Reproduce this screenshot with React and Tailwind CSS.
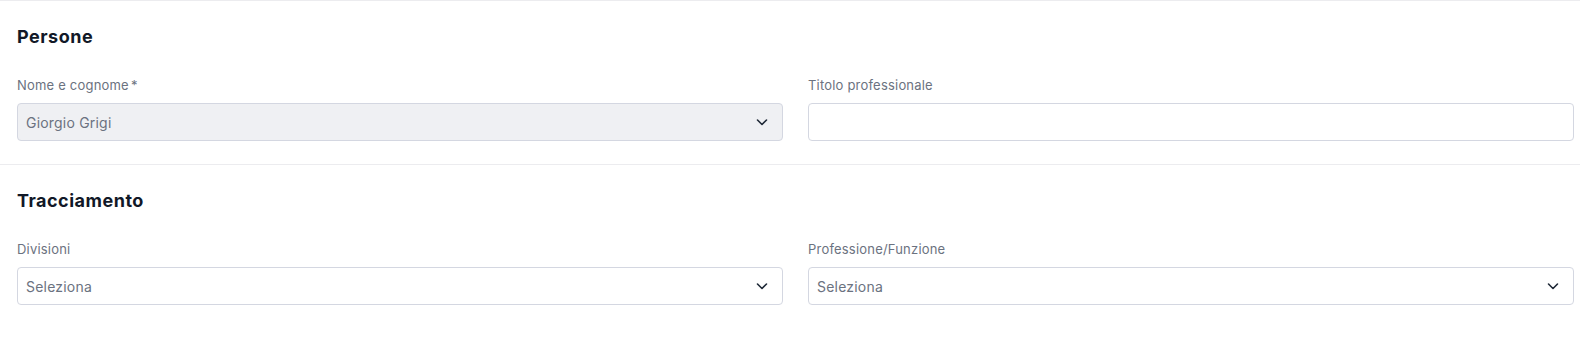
function Chevron() {
  return (
    <svg width="12" height="12" viewBox="0 0 12 12" fill="none" className="shrink-0">
      <path d="M1.5 4l4.5 4.5L10.5 4" stroke="#1f2937" strokeWidth="1.6" strokeLinecap="round" strokeLinejoin="round" />
    </svg>
  );
}

function Field({ label, required, children }) {
  return (
    <div className="flex flex-col">
      <label className="text-[13px] leading-[20px] tracking-[0.2px] text-[#6b7280]">
        {label}
        {required && <span className="ml-[2px]">*</span>}
      </label>
      <div className="mt-[8px]">{children}</div>
    </div>
  );
}

function SelectBox({ value, disabled }) {
  return (
    <div
      className={`h-[38px] flex items-center justify-between pl-[8px] pr-[14px] border border-[#d4d7e1] rounded-[4px] ${
        disabled ? 'bg-[#eff0f3]' : 'bg-white'
      }`}
    >
      <span className="text-[14px] tracking-[0.2px] text-[#6b7280]">{value}</span>
      <Chevron />
    </div>
  );
}

function Section({ title, children }) {
  return (
    <section className="border-t border-[#ececef] pt-[22px] pb-[23px] pl-[17px] pr-[6px]">
      <h2 className="text-[18px] leading-[28px] font-bold tracking-[0.5px] text-[#111827]">{title}</h2>
      <div className="mt-[24px] grid grid-cols-2 gap-x-[25px]">{children}</div>
    </section>
  );
}

export default function App() {
  return (
    <div className="w-[1580px] min-h-[349px] bg-white" style={{ fontFamily: 'Inter, "Noto Sans", sans-serif' }}>
      <Section title="Persone">
        <Field label="Nome e cognome" required>
          <SelectBox value="Giorgio Grigi" disabled />
        </Field>
        <Field label="Titolo professionale">
          <input
            type="text"
            className="w-full h-[38px] px-[8px] border border-[#d4d7e1] rounded-[4px] bg-white text-[14px] text-[#374151] outline-none"
          />
        </Field>
      </Section>
      <Section title="Tracciamento">
        <Field label="Divisioni">
          <SelectBox value="Seleziona" />
        </Field>
        <Field label="Professione/Funzione">
          <SelectBox value="Seleziona" />
        </Field>
      </Section>
    </div>
  );
}
